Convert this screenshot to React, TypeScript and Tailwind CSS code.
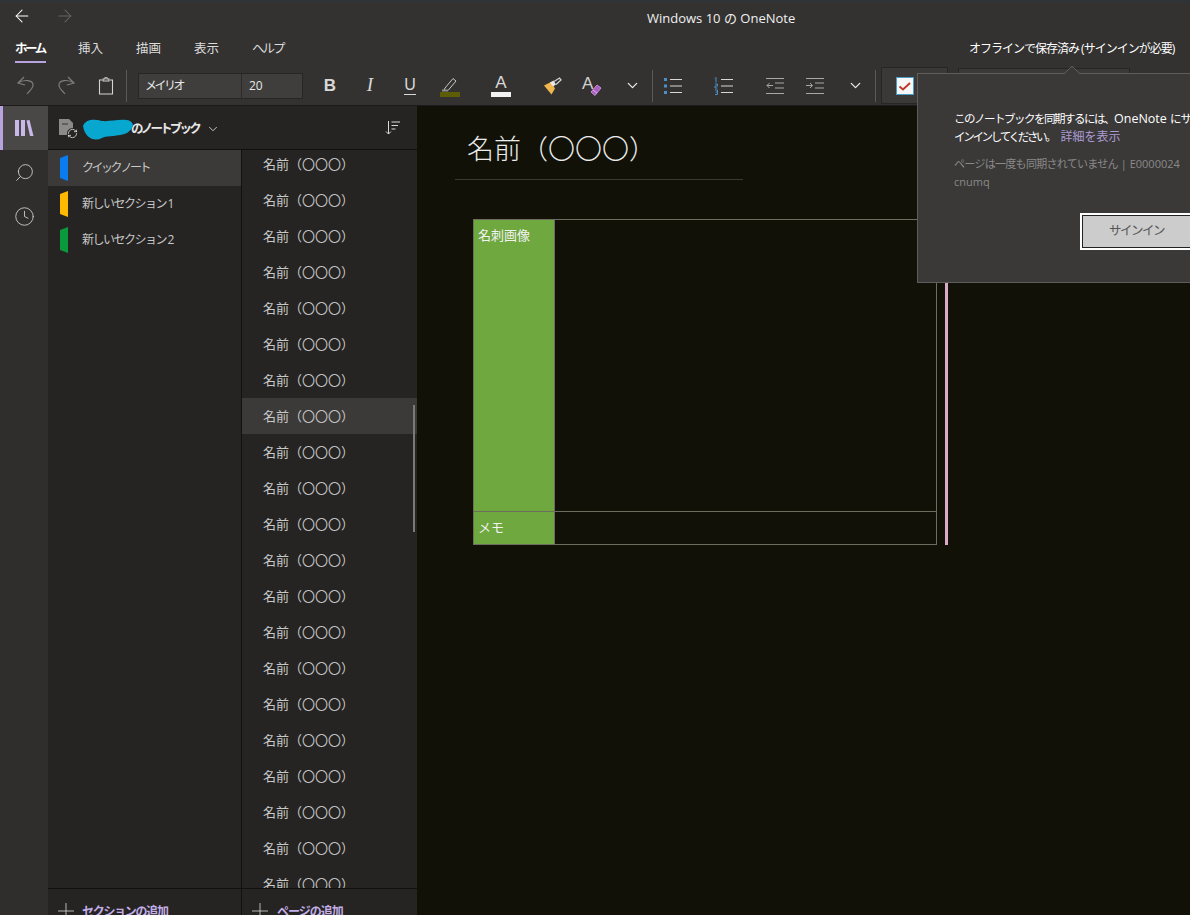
import { Search, Clock, ChevronDown, Plus, ArrowLeft, ArrowRight, RefreshCw } from "lucide-react";

const tabs = [
  { name: "挿入", cls: "" },
  { name: "描画", cls: "" },
  { name: "表示", cls: "" },
  { name: "ヘルプ", cls: "tracking-[-2px]" },
];
const sections = [
  { name: "クイック ノート", color: "bg-[#0a7cf0]", active: true, cls: "tracking-[-2.500px]" },
  { name: "新しいセクション 1", color: "bg-[#ffb900]", active: false, cls: "tracking-[-1.500px]" },
  { name: "新しいセクション 2", color: "bg-[#0a9a3c]", active: false, cls: "tracking-[-1.500px]" },
];
const pages = Array.from({ length: 21 }, (_, i) => i);

const Sep = () => <div className="w-px h-[32px] bg-[#5a5958] shrink-0" />;

const Tool = ({ w = "w-[40px]", children }: { w?: string; children: React.ReactNode }) => (
  <div className={`${w} h-full shrink-0 flex items-center justify-center`}>{children}</div>
);

const ListLines = ({ color, kind }: { color: string; kind: "bullet" | "num" }) => (
  <svg width="20" height="18" viewBox="0 0 20 18" fill="none">
    {kind === "bullet" ? (
      <g fill={color}>
        <rect x="1" y="1" width="3" height="3" />
        <rect x="1" y="7.5" width="3" height="3" />
        <rect x="1" y="14" width="3" height="3" />
      </g>
    ) : (
      <g stroke={color} strokeWidth="1">
        <path d="M2 0.5v5M1 1.5l1-1" />
        <path d="M1 7h2.5v2h-2.5v2h2.5" />
        <path d="M1 13h2.5v4.5h-2.5M1.5 15.2h2" />
      </g>
    )}
    <path d="M7 2.5h12M7 9h12M7 15.5h12" stroke="#d8d8d8" />
  </svg>
);

const Indent = ({ flip }: { flip?: boolean }) => (
  <svg width="20" height="18" viewBox="0 0 20 18" fill="none" stroke="#a8a8a8">
    <path d="M1 1.5h18M10 6h9M10 11h9M1 16.5h18" />
    {flip ? <path d="M1 8.5h6M5 6l2.5 2.5L5 11" /> : <path d="M8 8.5H2M4.500 6L2 8.500 4.500 11" />}
  </svg>
);

export default function App() {
  return (
    <div className="relative w-[1190px] h-[915px] overflow-hidden flex flex-col bg-[#111108] text-white font-['Open_Sans','Noto_Sans_CJK_JP',sans-serif]">
      {/* リボン */}
      <div className="h-[106px] shrink-0 flex flex-col bg-[#333231] border-t-2 border-[#2e3538] border-b border-b-[#1c1b1a]">
        <div className="relative h-[34px] flex items-start pt-[4px] pl-[12px] gap-[23px]">
          <ArrowLeft size={20} strokeWidth={1.25} className="text-white" />
          <ArrowRight size={20} strokeWidth={1.25} className="text-[#666564]" />
          <span className="absolute left-[647px] top-[7px] text-[13px] leading-[18px] text-[#f0f0f0]">Windows 10 の OneNote</span>
        </div>
        <div className="relative h-[30px] flex items-start pl-[15px] gap-[32px] text-[12.5px] leading-[26px] text-[#dcdcdc]">
          <div className="relative h-[27px] w-[31px] font-bold text-white whitespace-nowrap tracking-[-2.500px]">
            ホーム
            <div className="absolute left-0 right-0 bottom-0 h-[2px] bg-[#b8a3df]" />
          </div>
          {tabs.map((t) => (
            <span key={t.name} className={`w-[26px] whitespace-nowrap ${t.cls}`}>{t.name}</span>
          ))}
          <span className="absolute left-[969px] top-[2px] text-[12px] leading-[22px] text-white whitespace-nowrap tracking-[-1px]">オフラインで保存済み (サインインが必要)</span>
        </div>
        <div className="flex items-center h-[39px] pl-[6px]">
          <Tool>
            <svg width="20" height="20" viewBox="0 0 20 20" fill="none" stroke="#7d7c7b" strokeWidth="1.200">
              <path d="M8 1L2 7l7 2M2 7C8 3 17 4 17 9c0 4-4 6-6 9" />
            </svg>
          </Tool>
          <Tool>
            <svg width="20" height="20" viewBox="0 0 20 20" fill="none" stroke="#7d7c7b" strokeWidth="1.200">
              <path d="M12 1l6 6-7 2M18 7C12 3 3 4 3 9c0 4 4 6 6 9" />
            </svg>
          </Tool>
          <Tool>
            <svg width="16" height="18" viewBox="0 0 16 18" fill="none" stroke="#d4d4d4" strokeWidth="1.100">
              <path d="M4 3H1.500v14h13V3H12" />
              <path d="M5 4V2h2V.8h2V2h2v2z" />
            </svg>
          </Tool>
          <Sep />
          <div className="ml-[11px] flex h-[26px] w-[165px] shrink-0 bg-[#3f3e3d] border border-[#272625] text-[12px] text-[#e8e8e8] leading-[24px]">
            <div className="w-[103px] pl-[6px] border-r border-[#2c2b2a] tracking-[-2.500px]">メイリオ</div>
            <div className="pl-[7px]">20</div>
          </div>
          <div className="w-[7px] shrink-0" />
          <Tool><span className="font-['Liberation_Sans'] font-bold text-[17px] text-[#d8d8d8]">B</span></Tool>
          <Tool><span className="font-['Liberation_Serif'] italic text-[19px] text-[#d8d8d8]">I</span></Tool>
          <Tool>
            <span className="font-['Liberation_Sans'] text-[16px] leading-[16px] text-[#d8d8d8] border-b border-[#d8d8d8] pb-[1px]">U</span>
          </Tool>
          <Tool>
            <svg width="22" height="22" viewBox="0 0 22 22" fill="none">
              <path d="M6 13L14 3.500l3 2.500-8 9.500H5z" fill="#333231" stroke="#c8c8c8" />
              <path d="M3 15.500h6" stroke="#8d8d8d" strokeWidth="2" />
              <rect x="1" y="17" width="20" height="5" fill="#5d5d05" />
            </svg>
          </Tool>
          <Tool w="w-[62px]">
            <div className="flex flex-col items-center w-[20px]">
              <span className="font-['Liberation_Sans'] text-[17px] leading-[17px] text-[#d8d8d8]">A</span>
              <div className="w-[20px] h-[5px] bg-[#f2f2f2] mt-[1px]" />
            </div>
          </Tool>
          <Tool>
            <svg width="19" height="18" viewBox="0 0 19 18" fill="none">
              <path d="M1 8.500L8 5l4 6.500-3.500 6z" fill="#f0b64e" />
              <path d="M7 5.500l3.500-2 2.500 4-3 2z" fill="#e8e8e8" />
              <path d="M11 4.500L16.500 1l1.500 2-5 4.500" stroke="#cfcfcf" strokeWidth="1.300" />
            </svg>
          </Tool>
          <Tool>
            <div className="relative w-[20px] h-[22px]">
              <span className="absolute left-0 top-0 font-['Liberation_Sans'] text-[17px] leading-[17px] text-[#d0d0d0]">A</span>
              <svg className="absolute left-[8px] top-[9px]" width="12" height="13" viewBox="0 0 12 13" fill="none">
                <path d="M1 8l6-7 4 3-6 7.500z" fill="#a95fc0" stroke="#c98adb" />
                <path d="M3 6l4 3.200" stroke="#e0b8ea" />
              </svg>
            </div>
          </Tool>
          <Tool><ChevronDown size={17} strokeWidth={1.750} className="text-[#efefef]" /></Tool>
          <Sep />
          <Tool><ListLines color="#4a90c8" kind="bullet" /></Tool>
          <Tool w="w-[62px]"><ListLines color="#4a90c8" kind="num" /></Tool>
          <Tool><Indent /></Tool>
          <Tool><Indent flip /></Tool>
          <Tool><ChevronDown size={17} strokeWidth={1.750} className="text-[#efefef]" /></Tool>
          <Sep />
          <div className="ml-[5px] h-[37px] w-[67px] shrink-0 bg-[#3a3938] border border-[#272625] flex items-center pl-[14px]">
            <svg width="18" height="18" viewBox="0 0 18 18">
              <rect x=".5" y=".5" width="17" height="17" fill="#f7f7f7" stroke="#4a9cc8" />
              <path d="M3.500 9.500l3.500 3 7-6.500" fill="none" stroke="#c0392b" strokeWidth="2" />
            </svg>
          </div>
          <div className="ml-[10px] h-[35px] w-[172px] shrink-0 bg-[#3a3938] border border-[#272625]" />
        </div>
      </div>

      <div className="flex-1 flex min-h-0">
        {/* 左レール */}
        <div className="w-[48px] shrink-0 bg-[#2f2e2d] flex flex-col items-center">
          <div className="relative w-full h-[44px] bg-[#4a4847] flex items-center justify-center">
            <div className="absolute left-0 top-0 bottom-0 w-[3px] bg-[#b8a3df]" />
            <svg width="20" height="18" viewBox="0 0 20 18" fill="#c9b8ea">
              <rect x="1" y="1" width="4" height="16" />
              <rect x="7" y="1" width="4" height="16" />
              <path d="M12.500 1.500L15.500 1 19.500 17h-3.500z" />
            </svg>
          </div>
          <div className="h-[44px] flex items-center justify-center">
            <Search size={21} strokeWidth={1} className="text-[#d0d0d0] -scale-x-100" />
          </div>
          <div className="h-[44px] flex items-center justify-center">
            <Clock size={21} strokeWidth={1} className="text-[#d0d0d0]" />
          </div>
        </div>

        {/* セクション / ページ */}
        <div className="w-[369px] shrink-0 flex flex-col bg-[#252423]">
          <div className="h-[44px] shrink-0 flex items-center pt-[3px] border-b border-[#111] relative">
            <div className="relative ml-[11px] w-[20px] h-[20px]">
              <svg width="14" height="16" viewBox="0 0 14 16" className="absolute left-0 top-0">
                <path d="M0 0h10l4 4v12H0z" fill="#8b8a89" />
                <path d="M3 5h6" stroke="#333" />
              </svg>
              <RefreshCw size={11} strokeWidth={1.500} className="absolute left-[8px] top-[9px] text-white bg-[#252423] rounded-full" />
            </div>
            <svg width="52" height="24" viewBox="0 0 52 24" className="absolute left-[34px] top-[12px]">
              <path d="M1 8C4 1 12 1 20 3c8 1 20-3 28 0 5 3 3 8-3 12C36 19 26 17 20 20 12 24 3 20 1 8z" fill="#07a7cf" />
            </svg>
            <span className="ml-[52px] text-[12.500px] font-bold text-[#e8e8e8] whitespace-nowrap tracking-[-2.800px]">のノートブック</span>
            <ChevronDown size={14} strokeWidth={1.500} className="ml-[7px] text-[#dcdcdc]" />
            <svg width="16" height="16" viewBox="0 0 16 16" fill="none" stroke="#d8d8d8" className="absolute left-[337px] top-[14px]">
              <path d="M3.500 1v13M1 11.500L3.500 14 6 11.500M6.500 2H15M6.500 5.500h6.500M6.500 9h4" />
            </svg>
          </div>
          <div className="flex-1 flex min-h-0">
            <div className="w-[194px] shrink-0 border-r border-[#111] flex flex-col">
              {sections.map((s) => (
                <div key={s.name} className={`h-[36px] flex items-center pl-[12px] ${s.active ? "bg-[#3b3a39]" : ""}`}>
                  <div className={`w-[8px] h-[26px] rounded-l-[3px] [clip-path:polygon(0_12%,100%_0,100%_100%,0_88%)] ${s.color}`} />
                  <span className={`ml-[14px] text-[12px] text-[#c8c8c8] whitespace-nowrap ${s.cls}`}>{s.name}</span>
                </div>
              ))}
            </div>
            <div className="relative flex-1 overflow-hidden">
              <div className="-mt-[4px]">
                {pages.map((p) => (
                  <div
                    key={p}
                    className={`h-[36px] flex items-center pl-[21px] pt-[2px] text-[13px] text-[#c8c8c8] whitespace-nowrap ${p === 7 ? "bg-[#3b3a39]" : ""}`}
                  >
                    名前（〇〇〇）
                  </div>
                ))}
              </div>
              <div className="absolute left-[171px] top-[255px] w-[2px] h-[127px] bg-[#7a7978]" />
            </div>
          </div>
          <div className="h-[27px] shrink-0 flex border-t border-[#111]">
            <div className="w-[194px] shrink-0 border-r border-[#111] flex items-start pl-[5px] pt-[14px] text-[12px] font-bold text-[#c3aee6] whitespace-nowrap">
              <Plus size={26} strokeWidth={0.75} className="text-[#d8d8d8] -mt-[5px] mr-[3px]" />
              <span className="tracking-[-1.300px]">セクションの追加</span>
            </div>
            <div className="flex items-start pl-[5px] pt-[14px] text-[12px] font-bold text-[#c3aee6] whitespace-nowrap">
              <Plus size={26} strokeWidth={0.75} className="text-[#d8d8d8] -mt-[5px] mr-[4px]" />
              <span className="tracking-[-1px]">ページの追加</span>
            </div>
          </div>
        </div>

        {/* ノート本体 */}
        <div className="flex-1 min-w-0 pt-[25px] pl-[38px]">
          <div className="w-[288px] h-[49px] pl-[12px] border-b border-[#3a3a30] text-[27px] font-light leading-[36px] text-[#ececec] whitespace-nowrap">
            名前（〇〇〇）
          </div>
          <div className="mt-[39px] ml-[18px] flex">
            <table className="w-[464px] h-[326px] table-fixed border-collapse text-[13px] text-[#f2f2f2]">
              <tbody>
                <tr className="h-[292px]">
                  <td className="w-[81px] align-top bg-[#6ea83f] border border-[#6e6e5e] pl-[4px] pt-[6px] leading-[18px]">名刺画像</td>
                  <td className="border border-[#6e6e5e]" />
                </tr>
                <tr>
                  <td className="bg-[#6ea83f] border border-[#6e6e5e] pl-[4px] pb-[2px] leading-[18px]">メモ</td>
                  <td className="border border-[#6e6e5e]" />
                </tr>
              </tbody>
            </table>
            <div className="ml-[8px] w-[3px] h-[326px] bg-[#d8a9c8]" />
          </div>
        </div>
      </div>

      {/* サインインのポップアップ */}
      <div className="absolute left-[917px] top-[73px] w-[330px] h-[210px] bg-[#3a3938] border border-[#5e5d5c] pl-[36px] pt-[36px]">
        <svg width="16" height="8" viewBox="0 0 16 8" className="absolute left-[146px] -top-[8px]">
          <path d="M0 8L8 0l8 8z" fill="#3a3938" />
          <path d="M0 8L8 0l8 8" fill="none" stroke="#5e5d5c" />
        </svg>
        <p className="text-[11.500px] leading-[18px] text-white whitespace-nowrap">
          <span className="tracking-[-1.500px]">このノートブックを同期するには、</span>
          <span className="text-[12.500px]">OneNote </span>
          <span className="tracking-[-1px]">にサ</span>
          <br />
          <span className="tracking-[-2.300px]">インインしてください。</span>
          <span className="ml-[6px] text-[12px] text-[#ab9bd4]">詳細を表示</span>
        </p>
        <p className="mt-[9px] text-[11px] leading-[18px] text-[#8a8988] whitespace-nowrap">
          <span className="tracking-[-0.700px]">ページは一度も同期されていません</span> | E0000024
          <br />
          cnumq
        </p>
        <div className="ml-[126px] mt-[22px] w-[140px] h-[37px] bg-[#cccccc] border-2 border-white outline outline-1 -outline-offset-3 outline-[#222] flex items-center pl-[27px] text-[12.500px] text-[#555] tracking-[-1.500px]">
          サインイン
        </div>
      </div>
    </div>
  );
}
